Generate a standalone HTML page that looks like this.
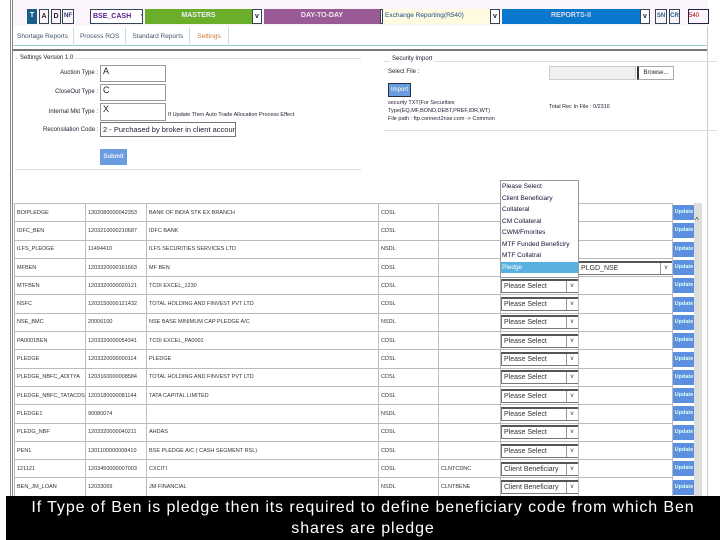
<!DOCTYPE html><html><head><style>
*{box-sizing:border-box;margin:0;padding:0}
body{width:720px;height:540px;overflow:hidden;background:#fff;font-family:"Liberation Sans",sans-serif;position:relative;font-size:7px;color:#223}
.a{position:absolute}
.box{border:1px solid #345;}
.tb{font-size:7px;font-weight:bold;text-align:center;line-height:13px;height:15px;top:9px;white-space:nowrap;overflow:hidden}
td{border:1px solid #bbb;font-size:5.5px;height:18.3px;padding:0 0 0 2px;white-space:nowrap;overflow:hidden;color:#333}
table{border-collapse:collapse;table-layout:fixed}
.sel{border:1px solid #777;border-top:2px solid #555;height:14px;width:78px;font-size:7px;line-height:11px;padding-left:2px;position:relative;background:#fff}
.sel:after{content:"v";position:absolute;right:1px;top:0;width:10px;height:11px;border-left:1px solid #999;text-align:center;font-size:6px}
.up{background:#5d8fe0;color:#dfe;font-size:5.5px;font-weight:bold;width:22px;height:15px;line-height:15px;text-align:center;overflow:hidden}
.lb{position:absolute;left:20px;width:78px;text-align:right;font-size:6px}
</style></head><body>
<div class="a" style="left:12px;top:0;width:696px;height:26px;background:#fbf5fb"></div>
<div class="a tb" style="left:27px;width:10px;background:#1a5f8a;color:#fff">T</div>
<div class="a tb box" style="left:39px;width:10px">A</div>
<div class="a tb box" style="left:51px;width:10px">D</div>
<div class="a tb box" style="left:62px;width:12px;color:#336;font-size:6px">NF</div>
<div class="a tb box" style="left:90px;width:53px;text-align:left;padding-left:2px;color:#551a8b;background:#fff">BSE_CASH <span style="margin-left:8px;color:#333">v</span></div>
<div class="a tb" style="left:145px;width:107px;background:#6aae2a;color:#eef">MASTERS</div>
<div class="a tb box" style="left:252px;width:10px;background:#fff">v</div>
<div class="a tb" style="left:264px;width:116px;background:#9a5a96;color:#eee">DAY-TO-DAY</div>
<div class="a tb box" style="left:380px;width:3px;background:#fff"></div>
<div class="a tb" style="left:383px;width:107px;background:#fffbe0;color:#1a4a8a;text-align:left;padding-left:2px;font-weight:normal;font-size:6.5px">Exchange Reporting(R540)</div>
<div class="a tb box" style="left:490px;width:10px;background:#fff">v</div>
<div class="a tb" style="left:502px;width:138px;background:#0a78cc;color:#dde">REPORTS-II</div>
<div class="a tb box" style="left:640px;width:10px;background:#fff">v</div>
<div class="a tb box" style="left:655px;width:12px;color:#1a5f8a;font-size:6px">SN</div>
<div class="a tb box" style="left:669px;width:11px;color:#1a5f8a;font-size:6px">CR</div>
<div class="a tb" style="left:688px;width:21px;border:1px solid #224;color:#a00;font-weight:normal;text-align:left;font-size:6px">540</div>
<div class="a" style="left:12px;top:26px;width:696px;height:20px;background:#fff;border-bottom:1px solid #9cc"></div>
<div class="a" style="left:12px;top:27px;height:19px;font-size:6.5px;line-height:19px;color:#456;white-space:nowrap">
<span style="display:inline-block;padding:0 5px;border-right:1px solid #cde">Shortage Reports</span><span style="display:inline-block;padding:0 6px;border-right:1px solid #cde">Process ROS</span><span style="display:inline-block;padding:0 6px;border-right:1px solid #cde">Standard Reports</span><span style="display:inline-block;padding:0 7px;border-right:1px solid #cde;color:#c73">Settings</span></div>
<div class="a" style="left:10px;top:0;width:3px;height:500px;border-left:1px solid #888;border-right:1px solid #888"></div>
<div class="a" style="left:13px;top:49px;width:694px;height:2px;background:#777"></div>
<div class="a" style="left:707px;top:26px;width:1px;height:470px;background:#ccc"></div>
<div class="a" style="left:15px;top:58px;width:346px;height:112px;border-top:1px solid #ddd;border-bottom:1px solid #ddd"></div>
<div class="a" style="left:18px;top:55px;background:#fff;padding:0 2px;font-size:6px">Settings Version 1.0</div>
<div class="lb" style="top:70px">Auction Type :</div>
<div class="lb" style="top:89px">CloseOut Type :</div>
<div class="lb" style="top:109px">Internal Mkt Type :</div>
<div class="a box" style="left:100px;top:65px;width:66px;height:17px;border-color:#999;font-size:9px;padding-left:2px">A</div>
<div class="a box" style="left:100px;top:84px;width:66px;height:17px;border-color:#999;font-size:9px;padding-left:2px">C</div>
<div class="a box" style="left:100px;top:103px;width:66px;height:18px;border-color:#999;font-size:9px;padding-left:2px">X</div>
<div class="a" style="left:168px;top:112px;font-size:5.5px">If Update Then Auto Trade Allocation Process Effect</div>
<div class="a" style="left:43px;top:127px;font-size:6px">Reconsilation Code :</div>
<div class="a box" style="left:100px;top:122px;width:136px;height:15px;border-color:#777;font-size:7.5px;padding-left:2px;line-height:13px;white-space:nowrap;overflow:hidden">2 - Purchased by broker in client account ∨</div>
<div class="a" style="left:100px;top:149px;width:27px;height:16px;background:#6a9ce0;color:#eef;font-size:6px;font-weight:bold;text-align:center;line-height:16px">Submit</div>
<div class="a" style="left:384px;top:61px;width:333px;height:70px;border-top:1px solid #ddd;border-bottom:1px solid #ddd"></div>
<div class="a" style="left:390px;top:56px;background:#fff;padding:0 2px;font-size:6px">Security Import</div>
<div class="a" style="left:388px;top:69px;font-size:6px">Select File :</div>
<div class="a" style="left:549px;top:66px;width:87px;height:14px;background:#f0f0f0;border:1px solid #ccc"></div>
<div class="a" style="left:637px;top:66px;width:37px;height:14px;border:1px solid #aaa;border-left:2px solid #333;font-size:6px;line-height:12px;text-align:center">Browse...</div>
<div class="a" style="left:388px;top:83px;width:23px;height:14px;background:#6a9ce0;border:1px solid #234;color:#ffd;font-size:6px;line-height:12px;text-align:center">Import</div>
<div class="a" style="left:388px;top:99px;font-size:5.5px;line-height:8px">security TXT(For Securities<br>Type(EQ,MF,BOND,DEBT,PREF,IDR,WT)<br>File path : ftp.connect2nse.com -&gt; Common</div>
<div class="a" style="left:549px;top:104px;font-size:5.5px">Total Rec In File : 0/2316</div>
<table class="a" style="left:14px;top:203px;width:680px">
<colgroup><col style="width:71px"><col style="width:61px"><col style="width:232px"><col style="width:60px"><col style="width:62px"><col style="width:78px"><col style="width:94px"><col style="width:22px"></colgroup>
<tbody id="tb"></tbody></table>
<div class="a" style="left:694px;top:203px;width:8px;height:293px;background:#ddd"></div>
<div class="a" style="left:695px;top:216px;font-size:8px;color:#333">^</div>
<div class="a" style="left:500px;top:180px;width:79px;height:98px;background:#fff;border:1px solid #999;font-size:6.5px;line-height:11.5px;padding-left:1px;color:#113;white-space:nowrap">Please Select<br>Client Beneficiary<br>Collateral<br>CM Collateral<br>CWM/Fmorites<br>MTF Funded Beneficiry<br>MTF Collatral<div style="background:#5ab0e0;color:#fff;margin-left:-1px;padding-left:1px">Pledge</div></div>
<div class="a" style="left:6px;top:496px;width:714px;height:44px;background:#000;color:#fff;font-size:16px;text-align:center;line-height:21px;padding-top:1px;white-space:nowrap;letter-spacing:0.9px">If Type of Ben is pledge then its required to define beneficiary code from which Ben<br>shares are pledge</div>
<script>
var r=[["BOIPLEDGE","1302080000042353","BANK OF INDIA STK EX BRANCH","CDSL"],["IDFC_BEN","1203210000210687","IDFC BANK","CDSL"],["ILFS_PLEDGE","11494410","ILFS SECURITIES SERVICES LTD","NSDL"],["MFBEN","1203320000161663","MF BEN","CDSL"],["MTFBEN","1203320000020121","TCDI EXCEL_1230","CDSL"],["NSFC","1203150000121432","TOTAL HOLDING AND FINVEST PVT LTD","CDSL"],["NSE_BMC","20006100","NSE BASE MINIMUM CAP PLEDGE A/C","NSDL"],["PA0001BEN","1203320000054341","TCDI EXCEL_PA0001","CDSL"],["PLEDGE","1203320000000114","PLEDGE","CDSL"],["PLEDGE_NBFC_ADITYA","1203160000008584","TOTAL HOLDING AND FINVEST PVT LTD","CDSL"],["PLEDGE_NBFC_TATACDSL","1203180000081144","TATA CAPITAL LIMITED","CDSL"],["PLEDGE1","90080074","","NSDL"],["PLEDG_NBF","1203320000040211","AHDAS","CDSL"],["PEN1","1301100000008410","BSE PLEDGE A/C ( CASH SEGMENT RSL)","CDSL"],["121121","1203450000007003","CXCITI","CDSL"],["BEN_JM_LOAN","12033069","JM FINANCIAL","NSDL"]];
var h="";r.forEach(function(x,i){var s="";if(i>3){var t=i>13?"Client Beneficiary":"Please Select";s='<div class="sel">'+t+'</div>';}
var p=i==3?'<div class="sel" style="width:95px;margin-left:-1px">PLGD_NSE</div>':'';
h+="<tr><td>"+x[0]+"</td><td>"+x[1]+"</td><td>"+x[2]+"</td><td>"+x[3]+"</td><td>"+(i==14?"CLNTCDNC":i==15?"CLNTBENE":"")+"</td><td style='padding:0'>"+s+"</td><td style='padding:0'>"+p+"</td><td style='padding:0;border:none'><div class='up'>Update</div></td></tr>";});
document.getElementById("tb").innerHTML=h;
</script>
</body></html>
